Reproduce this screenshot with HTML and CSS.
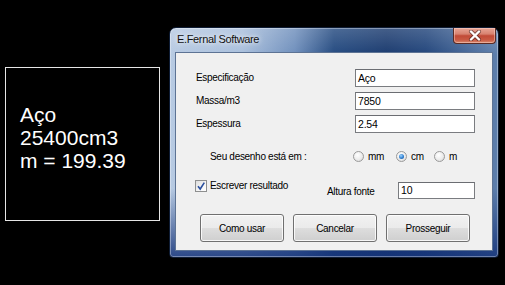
FILE: index.html
```html
<!DOCTYPE html>
<html>
<head>
<meta charset="utf-8">
<link rel="stylesheet" href="styles.css">
</head>
<body>
<div class="scene">
  <div class="result">
    <div>Aço</div>
    <div>25400cm3</div>
    <div>m = 199.39</div>
  </div>
  <div class="window">
    <div class="titlebar">
      <span class="title">E.Fernal Software</span>
      <div class="close">
        <svg width="14" height="11" viewBox="0 0 14 11">
          <path d="M3 1.5 L11 9.5 M11 1.5 L3 9.5" stroke="#3a1a1a" stroke-width="4" stroke-linecap="round" opacity="0.55"/>
          <path d="M3 1.5 L11 9.5 M11 1.5 L3 9.5" stroke="#ffffff" stroke-width="2.4" stroke-linecap="round"/>
        </svg>
      </div>
    </div>
    <div class="client">
      <div class="form">
        <span class="lbl">Especificação</span><div class="input">Aço</div>
        <span class="lbl">Massa/m3</span><div class="input">7850</div>
        <span class="lbl">Espessura</span><div class="input">2.54</div>
      </div>
      <div class="units">
        <span class="lbl units-lbl">Seu desenho está em :</span>
        <div class="radio-item r-mm"><span class="radio"></span><span class="lbl">mm</span></div>
        <div class="radio-item r-cm"><span class="radio on"></span><span class="lbl">cm</span></div>
        <div class="radio-item"><span class="radio"></span><span class="lbl">m</span></div>
      </div>
      <div class="options">
        <div class="check-item">
          <span class="check">
            <svg width="10" height="10" viewBox="0 0 10 10"><path d="M2 5.2 L4.2 8 L8.3 1.6" fill="none" stroke="#2a4f9e" stroke-width="1.6"/></svg>
          </span>
          <span class="lbl">Escrever resultado</span>
        </div>
        <span class="lbl altura">Altura fonte</span>
        <div class="input small">10</div>
      </div>
      <div class="buttons">
        <div class="btn">Como usar</div>
        <div class="btn">Cancelar</div>
        <div class="btn">Prosseguir</div>
      </div>
    </div>
  </div>
</div>
</body>
</html>
```
FILE: styles.css
```css
html, body {
  margin: 0;
  padding: 0;
  background: #000;
}
body {
  width: 505px;
  height: 285px;
  overflow: hidden;
}
.scene {
  display: flex;
  align-items: flex-start;
}
.result {
  box-sizing: border-box;
  margin: 67px 0 0 5px;
  width: 155px;
  height: 154px;
  border: 1px solid #e6e6e6;
  padding: 35px 0 0 14px;
  color: #fff;
  font-family: "Liberation Sans", Arial, sans-serif;
  font-size: 21px;
  line-height: 23px;
}
.window {
  box-sizing: border-box;
  margin: 27px 0 0 9px;
  width: 330px;
  height: 231px;
  border: 1px solid #0e1c34;
  border-radius: 7px 7px 4px 4px;
  padding: 0 5px 6px 5px;
  display: flex;
  flex-direction: column;
  background:
    linear-gradient(to bottom, rgba(255,255,255,0.18) 0%, rgba(255,255,255,0) 12%, rgba(0,0,0,0) 70%, rgba(20,50,120,0.85) 100%),
    linear-gradient(to right, #b7cae2 0%, #a9bfdc 22%, #6f8fbc 38%, #244a80 50%, #1b3b6f 66%, #23467c 78%, #5f80ad 100%);
  box-shadow: inset 0 0 0 1px rgba(255,255,255,0.35);
}
.titlebar {
  height: 24px;
  display: flex;
  justify-content: space-between;
  align-items: flex-start;
}
.title {
  padding-left: 2px;
  line-height: 22px;
  font-family: "Liberation Sans", Arial, sans-serif;
  font-size: 11px;
  letter-spacing: -0.35px;
  color: #111;
  text-shadow: 0 0 4px rgba(255,255,255,0.9), 0 0 8px rgba(255,255,255,0.6);
}
.close {
  box-sizing: border-box;
  width: 43px;
  height: 16px;
  margin-right: -3px;
  border: 1px solid #5a2b25;
  border-top: none;
  border-radius: 0 0 4px 4px;
  background: linear-gradient(to bottom, #e9a696 0%, #d88270 40%, #c14a36 52%, #c95a44 80%, #d98c70 100%);
  box-shadow: inset 0 0 0 1px rgba(255,220,210,0.45);
  display: flex;
  align-items: center;
  justify-content: center;
}
.client {
  box-sizing: border-box;
  flex: 1;
  background: #f0f0f0;
  border: 1px solid #5d7394;
  padding: 16px 0 0 0;
  font-family: "Liberation Sans", Arial, sans-serif;
  font-size: 10px;
  color: #000;
}
.lbl {
  font-size: 10px;
  letter-spacing: -0.3px;
  line-height: 12px;
  white-space: nowrap;
}
.form {
  display: grid;
  grid-template-columns: 159px 120px;
  row-gap: 5px;
  padding-left: 20px;
  align-items: center;
}
.input {
  box-sizing: border-box;
  height: 18px;
  border: 1px solid #7a7c80;
  border-top-color: #6b6d72;
  background: #fff;
  padding: 0 2px;
  font-size: 10.5px;
  letter-spacing: -0.2px;
  line-height: 16px;
}
.units {
  display: flex;
  align-items: center;
  margin-top: 17px;
  padding-left: 34px;
  height: 13px;
}
.units-lbl {
  width: 143px;
}
.radio-item {
  display: flex;
  align-items: center;
  gap: 4px;
}
.r-mm { width: 43px; }
.r-cm { width: 38px; }
.radio {
  box-sizing: border-box;
  width: 11px;
  height: 11px;
  border-radius: 50%;
  border: 1px solid #9a9a9a;
  background: radial-gradient(circle at 40% 35%, #ffffff 0%, #ececec 55%, #cfcfcf 100%);
  display: flex;
  align-items: center;
  justify-content: center;
}
.radio.on::after {
  content: "";
  width: 5px;
  height: 5px;
  border-radius: 50%;
  background: radial-gradient(circle at 40% 35%, #9fd4ff 0%, #2f7fd0 55%, #0f4a8c 100%);
}
.options {
  display: grid;
  grid-template-columns: 132px 71px 77px;
  align-items: start;
  margin-top: 17px;
  padding-left: 19px;
  height: 19px;
}
.check-item {
  display: flex;
  align-items: center;
  gap: 3px;
}
.check {
  box-sizing: border-box;
  width: 12px;
  height: 12px;
  border: 1px solid #8e8f8f;
  background: linear-gradient(135deg, #dcdcdc 0%, #f6f6f6 60%, #ffffff 100%);
  display: flex;
  align-items: center;
  justify-content: center;
}
.check svg { display: block; }
.altura {
  margin-top: 6px;
}
.input.small {
  height: 17px;
  margin-top: 2px;
  line-height: 15px;
}
.buttons {
  display: flex;
  gap: 9px;
  margin-top: 15px;
  padding-left: 24px;
}
.btn {
  box-sizing: border-box;
  width: 84px;
  height: 28px;
  border: 1px solid #707070;
  border-radius: 3px;
  background: linear-gradient(to bottom, #f2f2f2 0%, #ebebeb 48%, #dddddd 52%, #cfcfcf 100%);
  box-shadow: inset 0 0 0 1px rgba(255,255,255,0.8);
  display: flex;
  align-items: center;
  justify-content: center;
  font-size: 10px;
  letter-spacing: -0.3px;
}
```
